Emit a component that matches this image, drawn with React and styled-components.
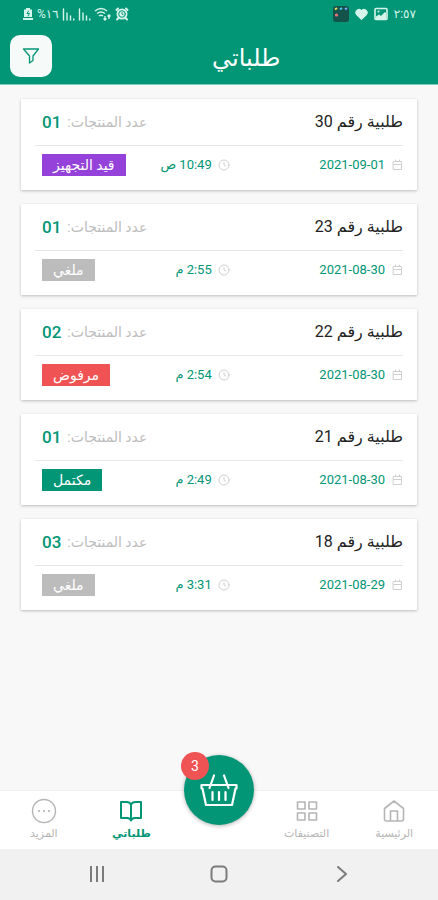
import React from "react";
import styled, { createGlobalStyle } from "styled-components";

const GREEN = "#029676";

const GlobalStyle = createGlobalStyle`
  *, *::before, *::after { box-sizing: border-box; }
  body {
    margin: 0;
    background: #f8f8f8;
    font-family: Roboto, "DejaVu Sans", sans-serif;
    color: #222;
  }
  button { font: inherit; border: 0; padding: 0; cursor: pointer; background: none; }
  h1, h2, p, ul { margin: 0; padding: 0; }
  ul { list-style: none; }
`;

const Screen = styled.div`
  min-height: 100vh;
  display: flex;
  flex-direction: column;
`;

const TopBar = styled.header`
  background: ${GREEN};
  color: #fff;
  border-bottom: 1px solid #7fc9b8;
`;

const StatusBar = styled.div`
  display: flex;
  justify-content: space-between;
  align-items: center;
  height: 28px;
  padding: 0 22px;
  color: #d5f5ec;
  font-size: 12px;
`;

const StatusGroup = styled.div`
  display: flex;
  align-items: center;
  gap: ${(p) => p.$gap}px;
  direction: ltr;
`;

const TitleRow = styled.div`
  display: flex;
  align-items: center;
  justify-content: space-between;
  height: 56px;
  padding: 0 10px;
  padding-right: 36%;
`;

const Title = styled.h1`
  font-size: 24px;
  line-height: 28px;
  font-weight: 500;
  padding-top: 4px;
`;

const FilterButton = styled.button`
  display: grid;
  place-items: center;
  width: 42px;
  height: 42px;
  border-radius: 10px;
  color: ${GREEN};
  background: #f6faf9;
`;

const OrderList = styled.ul`
  flex: 1;
  display: flex;
  flex-direction: column;
  gap: 14px;
  padding: 14px 21px;
`;

const OrderCard = styled.li`
  background: #fff;
  padding: 0 14px 11px;
  border-radius: 1px;
  box-shadow: 0 1px 3px rgba(0, 0, 0, 0.25);
`;

const CardTop = styled.div`
  display: flex;
  justify-content: space-between;
  align-items: center;
  height: 47px;
  padding-left: 7px;
  border-bottom: 1px solid #e6e6e6;
`;

const OrderName = styled.h2`
  font-size: 16px;
  line-height: 24px;
  font-weight: 400;
`;

const ProductCount = styled.p`
  display: flex;
  align-items: center;
  gap: 6px;
  font-size: 14px;
  line-height: 24px;
  color: #bdbdbd;
`;

const CountValue = styled.strong`
  font-size: 17px;
  font-weight: 500;
  color: ${GREEN};
`;

const CardBottom = styled.div`
  display: grid;
  grid-template-columns: 48% 1fr auto;
  align-items: center;
  height: 33px;
  padding: 5px 0 0 7px;
`;

const Stamp = styled.div`
  display: flex;
  align-items: center;
  gap: 6px;
  font-size: 13px;
  line-height: 20px;
  color: ${GREEN};
  svg { color: #cfcfcf; }
`;

const Badge = styled.span`
  display: block;
  padding: 0 11px;
  font-size: 14px;
  line-height: 22px;
  color: #fff;
  background: ${(p) => p.$color};
`;

const TabBar = styled.nav`
  display: grid;
  grid-template-columns: repeat(5, 1fr);
  height: 59px;
  background: #fff;
  border-top: 1px solid #f1f1f1;
`;

const Tab = styled.button`
  display: flex;
  flex-direction: column;
  align-items: center;
  gap: 2px;
  padding-top: 7px;
  color: ${(p) => (p.$active ? GREEN : "#b5b5b5")};
`;

const TabIcon = styled.span`
  display: grid;
  place-items: center;
  height: 26px;
`;

const TabLabel = styled.span`
  font-size: 11px;
  line-height: 16px;
  font-weight: ${(p) => (p.$active ? 700 : 400)};
`;

const BasketSlot = styled.div`
  display: flex;
  justify-content: center;
`;

const BasketButton = styled.button`
  position: relative;
  flex: none;
  display: grid;
  place-items: center;
  width: 70px;
  height: 70px;
  margin-top: -36px;
  border-radius: 50%;
  color: #fff;
  background: ${GREEN};
  box-shadow: 0 1px 4px rgba(0, 0, 0, 0.3);
`;

const BasketCount = styled.span`
  position: absolute;
  top: -3px;
  left: -3px;
  width: 28px;
  height: 28px;
  border-radius: 50%;
  font-size: 14px;
  line-height: 28px;
  background: #ef5354;
`;

const SystemBar = styled.div`
  display: grid;
  grid-template-columns: repeat(3, 1fr);
  height: 51px;
  padding: 0 36px 2px;
  background: #f1f1f1;
  color: #7b7b7b;
  direction: ltr;
`;

const SystemButton = styled.button`
  display: grid;
  place-items: center;
  color: inherit;
`;

const Icon = ({ size = 24, box = 24, stroke = 2, children }) => (
  <svg width={size} height={size} viewBox={`0 0 ${box} ${box}`} fill="none" stroke="currentColor"
    strokeWidth={stroke} strokeLinecap="round" strokeLinejoin="round" aria-hidden="true">
    {children}
  </svg>
);

const BatteryIcon = () => (
  <Icon size={12} box={12} stroke={1}>
    <path d="M4 0h4v1.500h2V9H2V1.500h2zM1 10h10v2H1z" fill="currentColor" stroke="none" />
    <path d="M6.500 3 5 5.500h2.500L6 8" stroke={GREEN} />
  </Icon>
);
const SignalIcon = () => (
  <Icon size={13} box={13} stroke={1.4}><path d="M1.500 1v11M5 5v7M8.500 8v4M11.800 11v1" /></Icon>
);
const WifiIcon = () => (
  <svg width="18" height="14" viewBox="0 0 18 14" fill="none" stroke="currentColor" strokeWidth="1.400" aria-hidden="true">
    <path d="M1 4q6-5 12 0M3 6.500q4-3 8 0M5 9q2-1.500 4 0" />
    <path d="M11 9v4M9.500 11.500 11 13l1.500-1.500M15 12V8M13.500 9.500 15 8l1.500 1.500" />
  </svg>
);
const AlarmIcon = () => (
  <Icon size={14} box={14}>
    <path d="M1.500 3 3 1.500M12.500 3 11 1.500M2 12.500l2-2M12 12.500l-2-2" />
    <circle cx="7" cy="7" r="5.500" fill="currentColor" stroke="none" />
    <circle cx="7" cy="7" r="3.300" stroke={GREEN} strokeWidth="1" />
    <path d="M7 5.500V7l1 .5" stroke={GREEN} strokeWidth="1" />
  </Icon>
);
const AppIcon = () => (
  <svg width="16" height="16" viewBox="0 0 16 16" aria-hidden="true">
    <rect width="16" height="16" rx="3" fill="#14534b" />
    <path d="M2 3.500 4 2" stroke="#e8e05a" strokeWidth="2" />
    <path d="M7 3.500 9 2" stroke="#54c4e8" strokeWidth="2" />
    <path d="M12 3.500 14 2" stroke="#7fa8ff" strokeWidth="2" />
    <circle cx="3.500" cy="9" r="1.600" fill="#f0707a" />
  </svg>
);
const HeartIcon = () => (
  <Icon size={13} box={24}><path fill="currentColor" d="M12 21 3 12a5.500 5.500 0 0 1 9-7 5.500 5.500 0 0 1 9 7z" /></Icon>
);
const PictureIcon = () => (
  <Icon size={14} box={14} stroke={1.6}>
    <rect x="1" y="1.500" width="12" height="11" rx="1" />
    <path d="M2 12V9.500l3-2 2 1.500 4-4 1 1V12z" fill="currentColor" stroke="none" />
    <circle cx="4.500" cy="4.500" r="1" fill="currentColor" stroke="none" />
  </Icon>
);
const FilterIcon = () => (
  <Icon size={18} box={18} stroke={1.3}><path d="M1.500 2h15L11 9v4.500L7.500 16V9z" /></Icon>
);
const CalendarIcon = () => (
  <Icon size={12} box={12} stroke={1}><path d="M2.500 2.500h8v8h-8zM2.500 5.500h8M4.500 1v1.500M8.500 1v1.500" /></Icon>
);
const ClockIcon = () => (
  <Icon size={12} box={12} stroke={1}><circle cx="6" cy="6" r="5" /><path d="M6 3.500V6l1.500 1" /></Icon>
);
const HomeIcon = () => (
  <Icon stroke={1.6}><path d="M2.500 9.500 12 2l9.500 7.500V20a2 2 0 0 1-2 2h-15a2 2 0 0 1-2-2zM8.500 22V12h7v10" /></Icon>
);
const GridIcon = () => (
  <Icon stroke={1.6}>
    <rect x="2.500" y="3" width="7.500" height="7" /><rect x="14" y="3" width="7.500" height="7" />
    <rect x="2.500" y="14" width="7.500" height="7" /><rect x="14" y="14" width="7.500" height="7" />
  </Icon>
);
const BookIcon = () => (
  <Icon><path d="M12 5.500C11 3.500 9.500 3 7.500 3H2v16h6c2.500 0 3.500 1 4 2.500.5-1.500 1.500-2.500 4-2.500h6V3h-5.500c-2 0-3.500.5-4.500 2.500zM12 5.500v16" /></Icon>
);
const MoreIcon = () => (
  <Icon size={26} box={26} stroke={1.4}>
    <circle cx="13" cy="13" r="11.500" />
    <path d="M8 13h.01M13 13h.01M18 13h.01" strokeWidth="2.200" />
  </Icon>
);
const BasketIcon = () => (
  <svg width="40" height="36" viewBox="0 0 40 36" fill="none" stroke="currentColor" strokeWidth="2.200"
    strokeLinecap="round" strokeLinejoin="round" aria-hidden="true">
    <path d="M2.500 13h35v3.500h-1L33 33H7L3.500 16.500h-1zM10.500 16 15 3.500M29.500 16 25 3.500M13.500 20v8M20 20v8M26.500 20v8" />
  </svg>
);
const RecentsIcon = () => (
  <Icon size={18} box={18}><path d="M3 1v16M9 1v16M15 1v16" strokeLinecap="butt" /></Icon>
);
const HomeKeyIcon = () => (
  <Icon size={18} box={18}><rect x="1.500" y="1.500" width="15" height="15" rx="4" /></Icon>
);
const BackKeyIcon = () => (
  <Icon size={18} box={18}><path d="m6 2 8 7-8 7" /></Icon>
);

const STATUS_COLORS = {
  "قيد التجهيز": "#9542da",
  "ملغي": "#bcbcbc",
  "مرفوض": "#ef5354",
  "مكتمل": GREEN,
};

const ORDERS = [
  { id: 30, count: "01", date: "2021-09-01", time: "10:49 ص", status: "قيد التجهيز" },
  { id: 23, count: "01", date: "2021-08-30", time: "2:55 م", status: "ملغي" },
  { id: 22, count: "02", date: "2021-08-30", time: "2:54 م", status: "مرفوض" },
  { id: 21, count: "01", date: "2021-08-30", time: "2:49 م", status: "مكتمل" },
  { id: 18, count: "03", date: "2021-08-29", time: "3:31 م", status: "ملغي" },
];

const Order = ({ order }) => (
  <OrderCard>
    <CardTop>
      <OrderName>طلبية رقم {order.id}</OrderName>
      <ProductCount>
        عدد المنتجات: <CountValue>{order.count}</CountValue>
      </ProductCount>
    </CardTop>
    <CardBottom>
      <Stamp><CalendarIcon /><time dir="ltr">{order.date}</time></Stamp>
      <Stamp><ClockIcon /><time>{order.time}</time></Stamp>
      <Badge $color={STATUS_COLORS[order.status]}>{order.status}</Badge>
    </CardBottom>
  </OrderCard>
);

const NavTab = ({ icon, label, active }) => (
  <Tab type="button" $active={active} aria-current={active ? "page" : undefined}>
    <TabIcon>{icon}</TabIcon>
    <TabLabel $active={active}>{label}</TabLabel>
  </Tab>
);

export default function App() {
  return (
    <Screen dir="rtl" lang="ar">
      <GlobalStyle />
      <TopBar>
        <StatusBar>
          <StatusGroup $gap={6}><AppIcon /><HeartIcon /><PictureIcon /><span>٢:٥٧</span></StatusGroup>
          <StatusGroup $gap={3}>
            <BatteryIcon /><span>%١٦</span><SignalIcon /><SignalIcon /><WifiIcon /><AlarmIcon />
          </StatusGroup>
        </StatusBar>
        <TitleRow>
          <Title>طلباتي</Title>
          <FilterButton type="button" aria-label="تصفية"><FilterIcon /></FilterButton>
        </TitleRow>
      </TopBar>
      <OrderList>
        {ORDERS.map((order) => <Order key={order.id} order={order} />)}
      </OrderList>
      <TabBar>
        <NavTab icon={<HomeIcon />} label="الرئيسية" />
        <NavTab icon={<GridIcon />} label="التصنيفات" />
        <BasketSlot>
          <BasketButton type="button" aria-label="السلة">
            <BasketIcon />
            <BasketCount>3</BasketCount>
          </BasketButton>
        </BasketSlot>
        <NavTab icon={<BookIcon />} label="طلباتي" active />
        <NavTab icon={<MoreIcon />} label="المزيد" />
      </TabBar>
      <SystemBar>
        <SystemButton type="button" aria-label="التطبيقات الأخيرة"><RecentsIcon /></SystemButton>
        <SystemButton type="button" aria-label="الشاشة الرئيسية"><HomeKeyIcon /></SystemButton>
        <SystemButton type="button" aria-label="رجوع"><BackKeyIcon /></SystemButton>
      </SystemBar>
    </Screen>
  );
}
